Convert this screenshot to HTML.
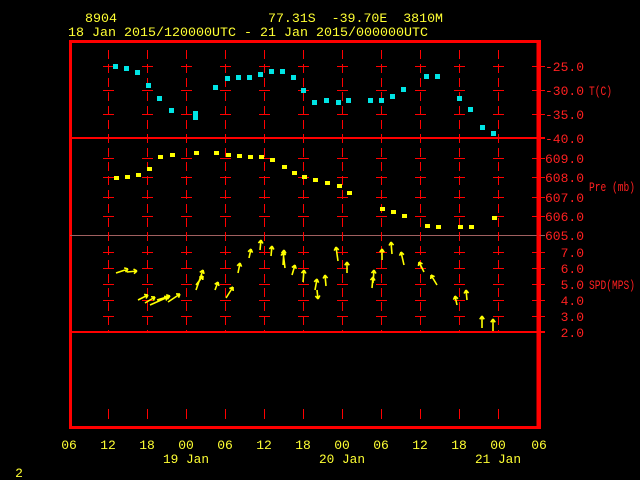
<!DOCTYPE html>
<html><head><style>
html,body{margin:0;padding:0;background:#000;width:640px;height:480px;overflow:hidden}
svg{display:block}
text{font-family:"Liberation Mono",monospace;font-size:13px}
</style></head><body>
<svg width="640" height="480" xmlns="http://www.w3.org/2000/svg">
<g fill="#ffff33" lengthAdjust="spacingAndGlyphs">
<text x="85" y="22" textLength="32" lengthAdjust="spacingAndGlyphs">8904</text>
<text x="268" y="22" textLength="175" lengthAdjust="spacingAndGlyphs" xml:space="preserve">77.31S  -39.70E  3810M</text>
<text x="68" y="36" textLength="360" lengthAdjust="spacingAndGlyphs">18 Jan 2015/120000UTC - 21 Jan 2015/000000UTC</text>
</g>
<g stroke="#ff0000" fill="none" shape-rendering="crispEdges">
<rect x="70.5" y="41.5" width="469" height="386" stroke-width="3"/>
<line x1="70" y1="138" x2="545" y2="138" stroke-width="2"/>
<line x1="70" y1="235.5" x2="545" y2="235.5" stroke="#a06060" stroke-width="1"/>
<line x1="70" y1="332" x2="545" y2="332" stroke-width="2"/>
<line x1="538" y1="41" x2="538" y2="428" stroke-width="3"/>
<g stroke-width="1" stroke-dasharray="9,5">
<path d="M108.5 50V332M147.5 50V332M186.5 50V332M225.5 50V332M264.5 50V332M303.5 50V332M342.5 50V332M381.5 50V332M420.5 50V332M459.5 50V332M498.5 50V332"/>
</g>
<path stroke-width="1" d="M108.5 409V419M147.5 409V419M186.5 409V419M225.5 409V419M264.5 409V419M303.5 409V419M342.5 409V419M381.5 409V419M420.5 409V419M459.5 409V419M498.5 409V419"/>
</g>
<g stroke="#ff0000" stroke-width="1" shape-rendering="crispEdges" id="ticks"></g>
<g fill="#ff2020" text-anchor="end">
<text x="584" y="71">-25.0</text><text x="584" y="95">-30.0</text><text x="584" y="119">-35.0</text><text x="584" y="143">-40.0</text>
<text x="584" y="163">609.0</text><text x="584" y="182">608.0</text><text x="584" y="202">607.0</text><text x="584" y="221">606.0</text><text x="584" y="240">605.0</text>
<text x="584" y="257">7.0</text><text x="584" y="273">6.0</text><text x="584" y="289">5.0</text><text x="584" y="305">4.0</text><text x="584" y="321">3.0</text><text x="584" y="337">2.0</text>
</g>
<g fill="#ff2020">
<text x="589" y="95" textLength="23" lengthAdjust="spacingAndGlyphs">T(C)</text>
<text x="589" y="191" textLength="46" lengthAdjust="spacingAndGlyphs">Pre (mb)</text>
<text x="589" y="289" textLength="46" lengthAdjust="spacingAndGlyphs">SPD(MPS)</text>
</g>
<g fill="#ffff33" text-anchor="middle">
<text x="69" y="449">06</text><text x="108" y="449">12</text><text x="147" y="449">18</text><text x="186" y="449">00</text><text x="225" y="449">06</text><text x="264" y="449">12</text><text x="303" y="449">18</text><text x="342" y="449">00</text><text x="381" y="449">06</text><text x="420" y="449">12</text><text x="459" y="449">18</text><text x="498" y="449">00</text><text x="539" y="449">06</text>
<text x="186" y="463" textLength="46" lengthAdjust="spacingAndGlyphs">19 Jan</text><text x="342" y="463" textLength="46" lengthAdjust="spacingAndGlyphs">20 Jan</text><text x="498" y="463" textLength="46" lengthAdjust="spacingAndGlyphs">21 Jan</text>
<text x="19" y="477">2</text>
</g>
<g id="cy" fill="#00e5e5"></g>
<g id="yl" fill="#ffff00"></g>
<g id="ar" stroke="#ffff00" stroke-width="1.6" fill="none"></g>
<script>
var NS="http://www.w3.org/2000/svg";
function el(p,t,a){var e=document.createElementNS(NS,t);for(var k in a)e.setAttribute(k,a[k]);document.getElementById(p).appendChild(e);}
var cols=[108,147,186,225,264,303,342,381,420,459,498];
var lv=[66,90,114,158,177,197,216,252,268,284,300,316];
var d="";
cols.forEach(function(x){lv.forEach(function(y){d+="M"+(x-5)+" "+(y+0.5)+"H"+(x+6);});});
lv.forEach(function(y){d+="M532 "+(y+0.5)+"H545";});
el("ticks","path",{d:d});
var c=[[116,67],[127,69],[138,73],[149,86],[160,99],[172,111],[196,114],[196,118],[216,88],[228,79],[239,78],[250,78],[261,75],[272,72],[283,72],[294,78],[304,91],[315,103],[327,101],[339,103],[349,101],[371,101],[382,101],[393,97],[404,90],[427,77],[438,77],[460,99],[471,110],[483,128],[494,134]];
c.forEach(function(p){el("cy","rect",{x:p[0]-3,y:p[1]-3,width:5,height:5});});
var y=[[116,178],[127,177],[138,175],[149,169],[160,157],[172,155],[196,153],[216,153],[228,155],[239,156],[250,157],[261,157],[272,160],[284,167],[294,173],[304,177],[315,180],[327,183],[339,186],[349,193],[382,209],[393,212],[404,216],[427,226],[438,227],[460,227],[471,227],[494,218]];
y.forEach(function(p){el("yl","rect",{x:p[0]-2,y:p[1]-2,width:5,height:4});});
var a=[[116,273,128,269],[127,272,137,271],[138,300,148,295],[145,303,155,297],[150,305,168,297],[157,300,170,296],[168,302,180,294],[196,290,203,270],[196,285,203,276],[215,290,218,282],[226,298,233,287],[238,273,240,263],[249,258,251,249],[260,250,261,240],[271,256,272,246],[283,265,284,250],[285,268,283,252],[292,275,295,265],[303,282,304,270],[315,290,317,279],[317,290,318,299],[326,286,325,275],[338,261,336,247],[347,273,347,262],[372,288,373,277],[373,283,374,270],[382,260,382,249],[392,254,391,242],[404,265,401,252],[424,272,419,262],[437,285,431,275],[457,305,455,296],[467,300,466,290],[482,328,482,316],[493,331,493,319]];
var dd="";
a.forEach(function(q){var dx=q[2]-q[0],dy=q[3]-q[1],L=Math.hypot(dx,dy),ux=dx/L,uy=dy/L,h=4;
dd+="M"+q[0]+" "+q[1]+"L"+q[2]+" "+q[3];
var c1=Math.cos(0.6),s1=Math.sin(0.6);
var bx=-ux,by=-uy;
dd+="M"+q[2]+" "+q[3]+"l"+(h*(bx*c1-by*s1))+" "+(h*(bx*s1+by*c1));
dd+="M"+q[2]+" "+q[3]+"l"+(h*(bx*c1+by*s1))+" "+(h*(-bx*s1+by*c1));});
el("ar","path",{d:dd});
</script>
</svg>
</body></html>
